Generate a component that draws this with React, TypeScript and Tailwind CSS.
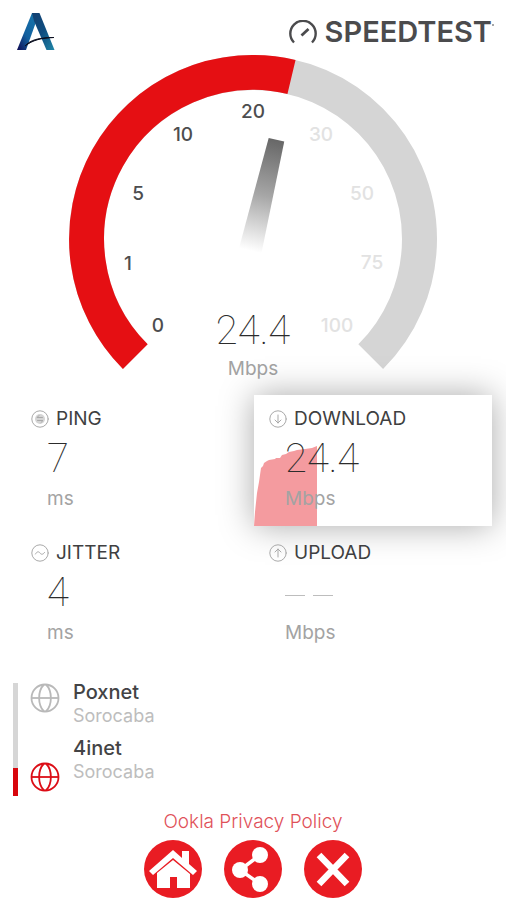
import type { ReactNode } from "react"

const ticks = [
  { label: "0", x: 89, y: 277, active: true },
  { label: "1", x: 59, y: 215, active: true },
  { label: "5", x: 69, y: 145, active: true },
  { label: "10", x: 114, y: 86, active: true },
  { label: "20", x: 184, y: 63, active: true },
  { label: "30", x: 252, y: 86, active: false },
  { label: "50", x: 293, y: 145, active: false },
  { label: "75", x: 303, y: 214, active: false },
  { label: "100", x: 268, y: 277, active: false },
]

function BrandLogo() {
  return (
    <svg viewBox="0 0 40 40" className="size-10" role="img" aria-label="Home">
      <defs>
        <linearGradient id="leg" x1="0" y1="1" x2="1" y2="0">
          <stop offset="0" stopColor="#100a52" />
          <stop offset="0.4" stopColor="#125f9e" />
          <stop offset="1" stopColor="#1779ae" />
        </linearGradient>
        <linearGradient id="stem" x1="0" y1="0" x2="1" y2="1">
          <stop offset="0" stopColor="#143f70" />
          <stop offset="0.5" stopColor="#0e4d80" />
          <stop offset="1" stopColor="#2087a8" />
        </linearGradient>
      </defs>
      <path d="M16 1h7l-3 9L10 38H1Z" fill="url(#leg)" />
      <path d="M16 1h7.500l15 37h-8L18 9Z" fill="url(#stem)" />
      <path d="M9 34c5-6 14-8.500 29-8.500C25 26 17 28 9 34Z" fill="#0b0f20" stroke="#0b0f20" strokeWidth="1" />
    </svg>
  )
}

function SpeedtestMark() {
  return (
    <svg viewBox="0 0 28 24" className="w-7 h-6" fill="none" stroke="#4b4b4d" strokeWidth="2.400" aria-hidden="true">
      <path d="M5 22.500A12.700 12.700 0 1 1 23 22.500" />
      <path d="m12.500 15.500 7-6.500" strokeWidth="2.800" />
    </svg>
  )
}

function Gauge() {
  return (
    <div className="relative mx-auto w-[368px] max-w-full">
      <svg viewBox="0 0 368 326" className="block w-full" role="img" aria-label="Download speed 24.4 Mbps">
        <defs>
          <linearGradient id="needle" x1="0" y1="0" x2="0" y2="1">
            <stop offset="0" stopColor="#676767" />
            <stop offset="0.5" stopColor="#a6a6a6" />
            <stop offset="1" stopColor="#ffffff" />
          </linearGradient>
        </defs>
        <path d="M66.300 301.700A166.500 166.500 0 1 1 301.700 301.700" fill="none" stroke="#d5d5d5" strokeWidth="35" />
        <path d="M66.300 301.700A166.500 166.500 0 0 1 222.500 22" fill="none" stroke="#e50f13" strokeWidth="35" />
        <path d="M176 82h16l3.500 114h-23Z" fill="url(#needle)" transform="rotate(13.300 184 184)" />
        {ticks.map((tick) => (
          <text
            key={tick.label}
            x={tick.x}
            y={tick.y}
            textAnchor="middle"
            className={tick.active ? "fill-[#4d4d4f] text-[19px] font-medium" : "fill-[#e2e2e2] text-[19px] font-medium"}
          >
            {tick.label}
          </text>
        ))}
      </svg>
      <div className="absolute inset-x-0 bottom-0 flex flex-col items-center">
        <span className="font-[Roboto] text-[40px] leading-[52px] font-thin text-[#2c2c2c]">24.4</span>
        <span className="text-[19px] leading-6 text-[#a3a3a3]">Mbps</span>
      </div>
    </div>
  )
}

function BadgeIcon({ children }: { children: ReactNode }) {
  return (
    <svg
      viewBox="0 0 18 18"
      className="size-[18px] shrink-0"
      fill="none"
      stroke="#a9a9a9"
      strokeLinecap="round"
      strokeLinejoin="round"
      aria-hidden="true"
    >
      <circle cx="9" cy="9" r="8.200" />
      {children}
    </svg>
  )
}

type MetricProps = {
  label: string
  unit: string
  icon: ReactNode
  value: ReactNode
  chart?: ReactNode
  active?: boolean
}

function Metric({ label, unit, icon, value, chart, active }: MetricProps) {
  return (
    <section
      className={
        active
          ? "relative z-0 h-[131px] bg-white px-[15px] pt-3 shadow-[0_0_32px_rgba(0,0,0,0.34)]"
          : "relative h-[131px] px-[15px] pt-3"
      }
    >
      {chart}
      <div className="relative">
        <h2 className="flex items-center gap-[7px] text-[19px] leading-6 text-[#3f3f41]">
          <BadgeIcon>{icon}</BadgeIcon>
          {label}
        </h2>
        <div className="pl-4">
          <div className="flex h-14 items-center font-[Roboto] text-[40px] leading-[56px] font-thin text-[#2c2c2c]">
            {value}
          </div>
          <div className="text-[19px] leading-6 text-[#a3a3a3]">{unit}</div>
        </div>
      </div>
    </section>
  )
}

function SpeedChart() {
  return (
    <svg viewBox="0 0 63 80" className="absolute bottom-0 left-0 h-20 w-[63px]" aria-hidden="true">
      <path
        d="M0 80 1 66 3 47 5 36 7 22 9 20 10 17 13 15 15 14 21 13 22 12 26 12 28 9 32 8 35 6 40 5 43 4 51 3 58 2 63 0V80Z"
        fill="#f49b9f"
      />
    </svg>
  )
}

function Globe({ color }: { color: string }) {
  return (
    <svg viewBox="0 0 30 30" className="size-[30px]" fill="none" stroke={color} strokeWidth="1.800" aria-hidden="true">
      <circle cx="15" cy="15" r="13.500" />
      <path d="M1.500 15h27" />
      <path d="M14 1.500C7.500 8 7.500 22 14 28.500M16 1.500C22.500 8 22.500 22 16 28.500" />
    </svg>
  )
}

function Server({ name, city }: { name: string; city: string }) {
  return (
    <div>
      <h3 className="text-xl leading-6 font-medium text-[#434345]">{name}</h3>
      <p className="text-lg leading-6 text-[#bdbdbd]">{city}</p>
    </div>
  )
}

function RoundButton({ label, children }: { label: string; children: ReactNode }) {
  return (
    <button type="button" aria-label={label} className="size-[58px] rounded-full bg-[#e91c23]">
      <svg viewBox="0 0 58 58" className="size-full" fill="#ffffff" aria-hidden="true">
        {children}
      </svg>
    </button>
  )
}

export default function App() {
  return (
    <main className="min-h-screen overflow-hidden bg-white font-[Inter,sans-serif]">
      <header className="flex h-[55px] items-start justify-between pt-3 pr-3 pl-4">
        <BrandLogo />
        <div className="flex h-10 items-center gap-2 text-[#4b4b4d]">
          <SpeedtestMark />
          <h1 className="flex text-[29px] leading-10 font-semibold">
            SPEEDTEST
            <span className="mt-3 size-[2px] rounded-full bg-[#8a8a8c]" />
          </h1>
        </div>
      </header>

      <Gauge />

      <div className="mt-[14px] grid grid-cols-2 gap-y-[3px] pr-[14px] pl-4">
        <Metric
          label="PING"
          unit="ms"
          value="7"
          icon={
            <>
              <circle cx="9" cy="9" r="5" fill="#d4d4d4" stroke="none" />
              <path d="M11.500 7.500H6l2-2M6.500 10.500H12l-2 2" />
            </>
          }
        />
        <Metric
          label="DOWNLOAD"
          unit="Mbps"
          value="24.4"
          active
          chart={<SpeedChart />}
          icon={<path d="M9 5v8M6 10l3 3 3-3" />}
        />
        <Metric label="JITTER" unit="ms" value="4" icon={<path d="M4.500 10C6 7 8 7.500 9 9s3 2 4.500-.5" />} />
        <Metric
          label="UPLOAD"
          unit="Mbps"
          icon={<path d="M9 13V5M6 8l3-3 3 3" />}
          value={
            <span className="flex gap-2 pt-1">
              <span className="h-px w-5 bg-[#bdbdbd]" />
              <span className="h-px w-5 bg-[#bdbdbd]" />
            </span>
          }
        />
      </div>

      <div className="mt-5 flex pl-[13px]">
        <div className="mt-[3px] flex w-[5px] flex-col">
          <div className="flex-3 bg-[#d6d6d6]" />
          <div className="flex-1 bg-[#d8060d]" />
        </div>
        <div className="mt-[3px] ml-3 flex flex-col justify-between pb-1">
          <Globe color="#b9b9b9" />
          <Globe color="#dc0d16" />
        </div>
        <div className="ml-[13px] flex flex-col gap-2 pb-3">
          <Server name="Poxnet" city="Sorocaba" />
          <Server name="4inet" city="Sorocaba" />
        </div>
      </div>

      <footer className="mt-[14px] flex flex-col items-center gap-[6px]">
        <a href="#privacy" className="text-[19px] leading-6 font-light text-[#df5159]">
          Ookla Privacy Policy
        </a>
        <div className="flex gap-[22px]">
          <RoundButton label="Home">
            <path d="M29 10 38 18V11h7v13l8 7-4 4L29 18 9 35l-4-4Z" />
            <path d="m29 20 17 14v14H33V37h-7v11H13V33Z" />
          </RoundButton>
          <RoundButton label="Share">
            <path d="M36 15 16 30 36 44" fill="none" stroke="#ffffff" strokeWidth="3.500" />
            <circle cx="36" cy="15" r="8" />
            <circle cx="16" cy="30" r="8" />
            <circle cx="36" cy="44" r="8" />
          </RoundButton>
          <RoundButton label="Close">
            <path d="m15 15 28 29M43 15 15 44" stroke="#ffffff" strokeWidth="6.500" />
          </RoundButton>
        </div>
      </footer>
    </main>
  )
}
